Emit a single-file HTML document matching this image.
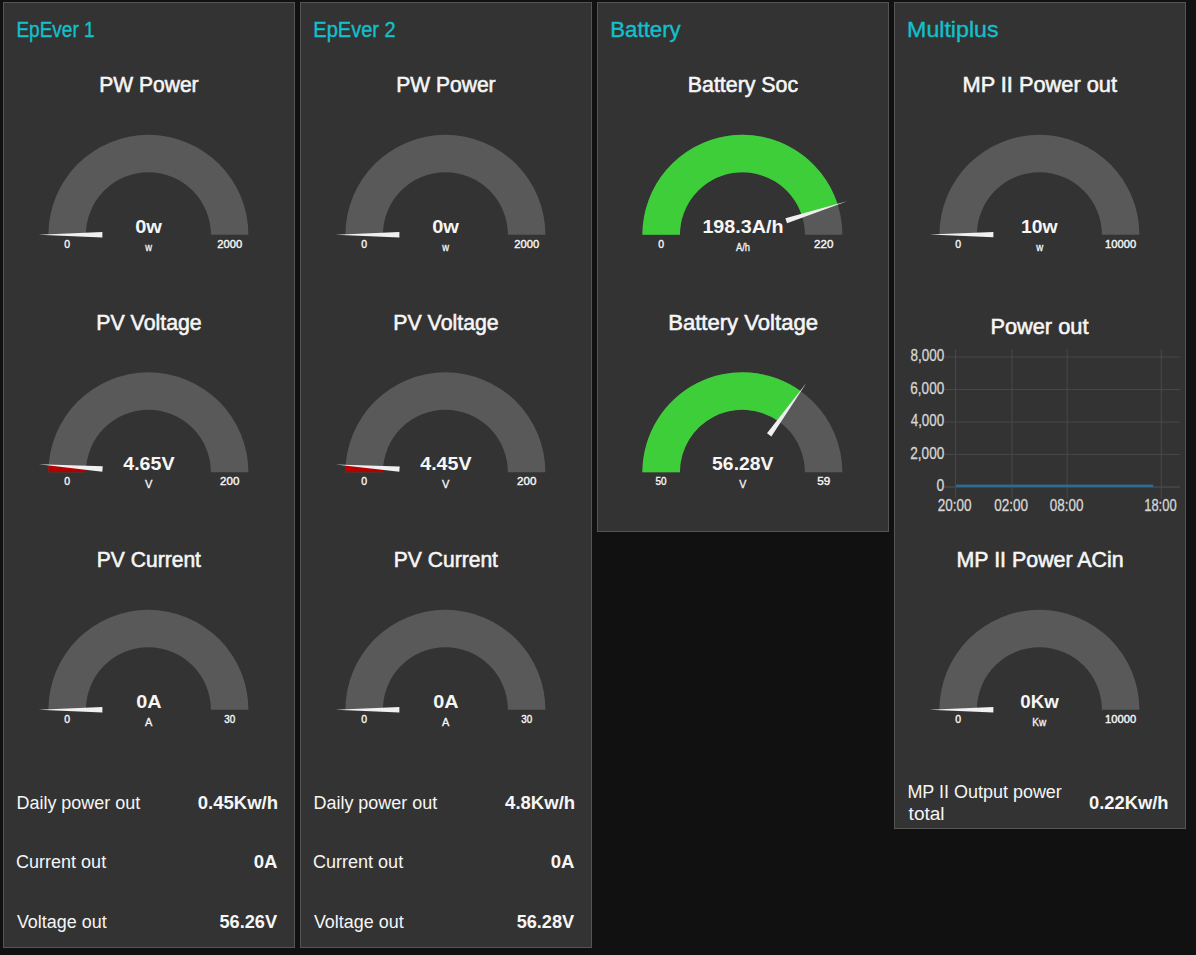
<!DOCTYPE html>
<html><head><meta charset="utf-8"><title>Node-RED Dashboard</title>
<style>
html,body{margin:0;padding:0;background:#111111;width:1196px;height:955px;overflow:hidden}
.grp-box{position:absolute;box-sizing:border-box;width:292px;background:#333333;border:1px solid #555555}
svg{position:absolute;left:0;top:0}
text{font-family:"Liberation Sans", sans-serif;white-space:pre}
.grp{fill:#12c0cc;stroke:#12c0cc;stroke-width:0.35px}
.gt{fill:#f6f6f6;stroke:#f6f6f6;stroke-width:0.55px}
.gv{font-weight:bold;fill:#f6f6f6}
.gu{fill:#f6f6f6;stroke:#f6f6f6;stroke-width:0.3px}
.gl{fill:#f6f6f6;stroke:#f6f6f6;stroke-width:0.4px}
.lt{fill:#f6f6f6}
.vt{font-weight:bold;fill:#f6f6f6}
.cl{fill:#d6d6d6;stroke:#d6d6d6;stroke-width:0.3px}
</style></head>
<body>
<div class="grp-box" style="left:3px;top:2px;height:946px"></div>
<div class="grp-box" style="left:300px;top:2px;height:946px"></div>
<div class="grp-box" style="left:597px;top:2px;height:530px"></div>
<div class="grp-box" style="left:894px;top:2px;height:827px"></div>
<svg width="1196" height="955" viewBox="0 0 1196 955">
<text x="16.43" y="36.90" class="grp" style="font-size:21.2px" textLength="78.19" lengthAdjust="spacingAndGlyphs">EpEver 1</text>
<text x="313.35" y="36.90" class="grp" style="font-size:21.2px" textLength="82.27" lengthAdjust="spacingAndGlyphs">EpEver 2</text>
<text x="610.26" y="36.90" class="grp" style="font-size:21.2px" textLength="70.50" lengthAdjust="spacingAndGlyphs">Battery</text>
<text x="907.09" y="36.90" class="grp" style="font-size:21.2px" textLength="91.44" lengthAdjust="spacingAndGlyphs">Multiplus</text>
<text x="99.26" y="91.90" class="gt" style="font-size:21.2px" textLength="99.37" lengthAdjust="spacingAndGlyphs">PW Power</text>
<path d="M85.90,234.80 L48.40,234.80 A100,100 0 0 1 248.40,234.80 L210.90,234.80 A62.5,62.5 0 0 0 85.90,234.80 Z" fill="#595959"/>
<path d="M102.40,232.10 L102.40,237.50 L38.50,234.80 Z" fill="#f0f0f0"/>
<text x="135.20" y="232.80" class="gv" style="font-size:18.8px" textLength="26.78" lengthAdjust="spacingAndGlyphs">0w</text>
<text x="145.30" y="250.80" class="gu" style="font-size:10.5px" textLength="6.77" lengthAdjust="spacingAndGlyphs">w</text>
<text x="64.18" y="247.80" class="gl" style="font-size:11.4px" textLength="5.82" lengthAdjust="spacingAndGlyphs">0</text>
<text x="217.29" y="247.80" class="gl" style="font-size:11.4px" textLength="24.90" lengthAdjust="spacingAndGlyphs">2000</text>
<text x="96.24" y="329.60" class="gt" style="font-size:21.2px" textLength="105.48" lengthAdjust="spacingAndGlyphs">PV Voltage</text>
<path d="M85.90,472.30 L48.40,472.30 A100,100 0 0 1 248.40,472.30 L210.90,472.30 A62.5,62.5 0 0 0 85.90,472.30 Z" fill="#595959"/>
<path d="M85.90,472.30 L48.40,472.30 A100,100 0 0 1 48.67,465.00 L86.07,467.74 A62.5,62.5 0 0 0 85.90,472.30 Z" fill="#b30000"/>
<path d="M102.72,466.25 L102.33,471.64 L38.79,464.28 Z" fill="#f0f0f0"/>
<text x="123.26" y="470.30" class="gv" style="font-size:18.8px" textLength="51.31" lengthAdjust="spacingAndGlyphs">4.65V</text>
<text x="144.99" y="488.30" class="gu" style="font-size:10.5px" textLength="7.41" lengthAdjust="spacingAndGlyphs">V</text>
<text x="64.18" y="485.30" class="gl" style="font-size:11.4px" textLength="5.82" lengthAdjust="spacingAndGlyphs">0</text>
<text x="220.07" y="485.30" class="gl" style="font-size:11.4px" textLength="19.33" lengthAdjust="spacingAndGlyphs">200</text>
<text x="96.76" y="567.00" class="gt" style="font-size:21.2px" textLength="104.23" lengthAdjust="spacingAndGlyphs">PV Current</text>
<path d="M85.90,709.80 L48.40,709.80 A100,100 0 0 1 248.40,709.80 L210.90,709.80 A62.5,62.5 0 0 0 85.90,709.80 Z" fill="#595959"/>
<path d="M102.40,707.10 L102.40,712.50 L38.50,709.80 Z" fill="#f0f0f0"/>
<text x="136.21" y="707.80" class="gv" style="font-size:18.8px" textLength="25.36" lengthAdjust="spacingAndGlyphs">0A</text>
<text x="145.02" y="725.80" class="gu" style="font-size:10.5px" textLength="7.35" lengthAdjust="spacingAndGlyphs">A</text>
<text x="64.18" y="722.80" class="gl" style="font-size:11.4px" textLength="5.82" lengthAdjust="spacingAndGlyphs">0</text>
<text x="224.33" y="722.80" class="gl" style="font-size:11.4px" textLength="10.96" lengthAdjust="spacingAndGlyphs">30</text>
<text x="16.52" y="809.00" class="lt" style="font-size:18.8px" textLength="123.61" lengthAdjust="spacingAndGlyphs">Daily power out</text>
<text x="16.10" y="868.00" class="lt" style="font-size:18.8px" textLength="90.04" lengthAdjust="spacingAndGlyphs">Current out</text>
<text x="16.91" y="927.70" class="lt" style="font-size:18.8px" textLength="89.72" lengthAdjust="spacingAndGlyphs">Voltage out</text>
<text x="197.66" y="808.80" class="vt" style="font-size:19.0px" textLength="80.46" lengthAdjust="spacingAndGlyphs">0.45Kw/h</text>
<text x="253.76" y="868.00" class="vt" style="font-size:19.0px" textLength="23.77" lengthAdjust="spacingAndGlyphs">0A</text>
<text x="219.45" y="927.70" class="vt" style="font-size:19.0px" textLength="57.67" lengthAdjust="spacingAndGlyphs">56.26V</text>
<text x="396.26" y="91.90" class="gt" style="font-size:21.2px" textLength="99.37" lengthAdjust="spacingAndGlyphs">PW Power</text>
<path d="M382.90,234.80 L345.40,234.80 A100,100 0 0 1 545.40,234.80 L507.90,234.80 A62.5,62.5 0 0 0 382.90,234.80 Z" fill="#595959"/>
<path d="M399.40,232.10 L399.40,237.50 L335.50,234.80 Z" fill="#f0f0f0"/>
<text x="432.20" y="232.80" class="gv" style="font-size:18.8px" textLength="26.78" lengthAdjust="spacingAndGlyphs">0w</text>
<text x="442.30" y="250.80" class="gu" style="font-size:10.5px" textLength="6.77" lengthAdjust="spacingAndGlyphs">w</text>
<text x="361.18" y="247.80" class="gl" style="font-size:11.4px" textLength="5.82" lengthAdjust="spacingAndGlyphs">0</text>
<text x="514.29" y="247.80" class="gl" style="font-size:11.4px" textLength="24.90" lengthAdjust="spacingAndGlyphs">2000</text>
<text x="393.24" y="329.60" class="gt" style="font-size:21.2px" textLength="105.48" lengthAdjust="spacingAndGlyphs">PV Voltage</text>
<path d="M382.90,472.30 L345.40,472.30 A100,100 0 0 1 545.40,472.30 L507.90,472.30 A62.5,62.5 0 0 0 382.90,472.30 Z" fill="#595959"/>
<path d="M382.90,472.30 L345.40,472.30 A100,100 0 0 1 345.64,465.32 L383.05,467.93 A62.5,62.5 0 0 0 382.90,472.30 Z" fill="#b30000"/>
<path d="M399.70,466.39 L399.32,471.78 L335.77,464.62 Z" fill="#f0f0f0"/>
<text x="420.26" y="470.30" class="gv" style="font-size:18.8px" textLength="51.31" lengthAdjust="spacingAndGlyphs">4.45V</text>
<text x="441.99" y="488.30" class="gu" style="font-size:10.5px" textLength="7.41" lengthAdjust="spacingAndGlyphs">V</text>
<text x="361.18" y="485.30" class="gl" style="font-size:11.4px" textLength="5.82" lengthAdjust="spacingAndGlyphs">0</text>
<text x="517.07" y="485.30" class="gl" style="font-size:11.4px" textLength="19.33" lengthAdjust="spacingAndGlyphs">200</text>
<text x="393.76" y="567.00" class="gt" style="font-size:21.2px" textLength="104.23" lengthAdjust="spacingAndGlyphs">PV Current</text>
<path d="M382.90,709.80 L345.40,709.80 A100,100 0 0 1 545.40,709.80 L507.90,709.80 A62.5,62.5 0 0 0 382.90,709.80 Z" fill="#595959"/>
<path d="M399.40,707.10 L399.40,712.50 L335.50,709.80 Z" fill="#f0f0f0"/>
<text x="433.21" y="707.80" class="gv" style="font-size:18.8px" textLength="25.36" lengthAdjust="spacingAndGlyphs">0A</text>
<text x="442.02" y="725.80" class="gu" style="font-size:10.5px" textLength="7.35" lengthAdjust="spacingAndGlyphs">A</text>
<text x="361.18" y="722.80" class="gl" style="font-size:11.4px" textLength="5.82" lengthAdjust="spacingAndGlyphs">0</text>
<text x="521.33" y="722.80" class="gl" style="font-size:11.4px" textLength="10.96" lengthAdjust="spacingAndGlyphs">30</text>
<text x="313.52" y="809.00" class="lt" style="font-size:18.8px" textLength="123.61" lengthAdjust="spacingAndGlyphs">Daily power out</text>
<text x="313.10" y="868.00" class="lt" style="font-size:18.8px" textLength="90.04" lengthAdjust="spacingAndGlyphs">Current out</text>
<text x="313.91" y="927.70" class="lt" style="font-size:18.8px" textLength="89.72" lengthAdjust="spacingAndGlyphs">Voltage out</text>
<text x="505.12" y="808.80" class="vt" style="font-size:19.0px" textLength="70.02" lengthAdjust="spacingAndGlyphs">4.8Kw/h</text>
<text x="550.76" y="868.00" class="vt" style="font-size:19.0px" textLength="23.77" lengthAdjust="spacingAndGlyphs">0A</text>
<text x="516.66" y="927.70" class="vt" style="font-size:19.0px" textLength="57.47" lengthAdjust="spacingAndGlyphs">56.28V</text>
<text x="687.84" y="91.60" class="gt" style="font-size:21.2px" textLength="110.33" lengthAdjust="spacingAndGlyphs">Battery Soc</text>
<path d="M679.90,234.80 L642.40,234.80 A100,100 0 0 1 842.40,234.80 L804.90,234.80 A62.5,62.5 0 0 0 679.90,234.80 Z" fill="#595959"/>
<path d="M679.90,234.80 L642.40,234.80 A100,100 0 0 1 837.64,204.31 L801.92,215.74 A62.5,62.5 0 0 0 679.90,234.80 Z" fill="#3dce39"/>
<path d="M787.03,223.34 L785.39,218.20 L847.07,201.29 Z" fill="#f0f0f0"/>
<text x="702.42" y="232.80" class="gv" style="font-size:18.8px" textLength="81.13" lengthAdjust="spacingAndGlyphs">198.3A/h</text>
<text x="735.98" y="250.80" class="gu" style="font-size:10.5px" textLength="14.04" lengthAdjust="spacingAndGlyphs">A/h</text>
<text x="658.18" y="247.80" class="gl" style="font-size:11.4px" textLength="5.82" lengthAdjust="spacingAndGlyphs">0</text>
<text x="814.07" y="247.80" class="gl" style="font-size:11.4px" textLength="19.33" lengthAdjust="spacingAndGlyphs">220</text>
<text x="668.18" y="329.90" class="gt" style="font-size:21.2px" textLength="149.86" lengthAdjust="spacingAndGlyphs">Battery Voltage</text>
<path d="M679.90,472.30 L642.40,472.30 A100,100 0 0 1 842.40,472.30 L804.90,472.30 A62.5,62.5 0 0 0 679.90,472.30 Z" fill="#595959"/>
<path d="M679.90,472.30 L642.40,472.30 A100,100 0 0 1 800.61,390.99 L778.78,421.48 A62.5,62.5 0 0 0 679.90,472.30 Z" fill="#3dce39"/>
<path d="M771.37,436.47 L766.98,433.33 L806.38,382.94 Z" fill="#f0f0f0"/>
<text x="712.12" y="470.30" class="gv" style="font-size:18.8px" textLength="61.32" lengthAdjust="spacingAndGlyphs">56.28V</text>
<text x="739.15" y="488.30" class="gu" style="font-size:10.5px" textLength="7.10" lengthAdjust="spacingAndGlyphs">V</text>
<text x="655.60" y="485.30" class="gl" style="font-size:11.4px" textLength="10.99" lengthAdjust="spacingAndGlyphs">50</text>
<text x="817.33" y="485.30" class="gl" style="font-size:11.4px" textLength="13.02" lengthAdjust="spacingAndGlyphs">59</text>
<text x="962.50" y="92.10" class="gt" style="font-size:21.2px" textLength="154.48" lengthAdjust="spacingAndGlyphs">MP II Power out</text>
<path d="M976.90,234.80 L939.40,234.80 A100,100 0 0 1 1139.40,234.80 L1101.90,234.80 A62.5,62.5 0 0 0 976.90,234.80 Z" fill="#595959"/>
<path d="M993.41,231.96 L993.39,237.36 L929.50,234.45 Z" fill="#f0f0f0"/>
<text x="1021.04" y="232.80" class="gv" style="font-size:18.8px" textLength="36.67" lengthAdjust="spacingAndGlyphs">10w</text>
<text x="1036.20" y="250.80" class="gu" style="font-size:10.5px" textLength="6.97" lengthAdjust="spacingAndGlyphs">w</text>
<text x="955.18" y="247.80" class="gl" style="font-size:11.4px" textLength="5.82" lengthAdjust="spacingAndGlyphs">0</text>
<text x="1105.06" y="247.80" class="gl" style="font-size:11.4px" textLength="31.07" lengthAdjust="spacingAndGlyphs">10000</text>
<text x="956.54" y="567.10" class="gt" style="font-size:21.2px" textLength="167.17" lengthAdjust="spacingAndGlyphs">MP II Power ACin</text>
<path d="M976.90,709.80 L939.40,709.80 A100,100 0 0 1 1139.40,709.80 L1101.90,709.80 A62.5,62.5 0 0 0 976.90,709.80 Z" fill="#595959"/>
<path d="M993.40,707.10 L993.40,712.50 L929.50,709.80 Z" fill="#f0f0f0"/>
<text x="1020.35" y="707.80" class="gv" style="font-size:18.8px" textLength="38.53" lengthAdjust="spacingAndGlyphs">0Kw</text>
<text x="1032.33" y="725.80" class="gu" style="font-size:10.5px" textLength="13.89" lengthAdjust="spacingAndGlyphs">Kw</text>
<text x="955.18" y="722.80" class="gl" style="font-size:11.4px" textLength="5.82" lengthAdjust="spacingAndGlyphs">0</text>
<text x="1105.06" y="722.80" class="gl" style="font-size:11.4px" textLength="31.07" lengthAdjust="spacingAndGlyphs">10000</text>
<text x="990.40" y="333.90" class="gt" style="font-size:21.2px" textLength="98.06" lengthAdjust="spacingAndGlyphs">Power out</text>
<rect x="944" y="356.54" width="236" height="1" fill="#494949"/>
<text x="910.43" y="361.24" class="cl" style="font-size:17.0px" textLength="33.78" lengthAdjust="spacingAndGlyphs">8,000</text>
<rect x="944" y="389.04" width="236" height="1" fill="#494949"/>
<text x="910.32" y="393.74" class="cl" style="font-size:17.0px" textLength="33.89" lengthAdjust="spacingAndGlyphs">6,000</text>
<rect x="944" y="421.54" width="236" height="1" fill="#494949"/>
<text x="910.70" y="426.24" class="cl" style="font-size:17.0px" textLength="33.50" lengthAdjust="spacingAndGlyphs">4,000</text>
<rect x="944" y="453.90" width="236" height="1" fill="#494949"/>
<text x="910.32" y="458.60" class="cl" style="font-size:17.0px" textLength="33.89" lengthAdjust="spacingAndGlyphs">2,000</text>
<rect x="944" y="486.54" width="236" height="1" fill="#535353"/>
<text x="936.44" y="491.24" class="cl" style="font-size:17.0px" textLength="7.80" lengthAdjust="spacingAndGlyphs">0</text>
<rect x="955.05" y="349" width="1" height="149.5" fill="#494949"/>
<text x="937.83" y="511.00" class="cl" style="font-size:17.0px" textLength="33.78" lengthAdjust="spacingAndGlyphs">20:00</text>
<rect x="1011.54" y="349" width="1" height="149.5" fill="#494949"/>
<text x="994.26" y="511.00" class="cl" style="font-size:17.0px" textLength="33.85" lengthAdjust="spacingAndGlyphs">02:00</text>
<rect x="1066.65" y="349" width="1" height="149.5" fill="#494949"/>
<text x="1049.86" y="511.00" class="cl" style="font-size:17.0px" textLength="33.64" lengthAdjust="spacingAndGlyphs">08:00</text>
<rect x="1160.75" y="349" width="1" height="149.5" fill="#494949"/>
<text x="1144.23" y="511.00" class="cl" style="font-size:17.0px" textLength="32.36" lengthAdjust="spacingAndGlyphs">18:00</text>
<rect x="956" y="484.6" width="197.2" height="2.4" fill="#306b94"/>
<text x="907.42" y="798.00" class="lt" style="font-size:18.8px" textLength="154.44" lengthAdjust="spacingAndGlyphs">MP II Output power</text>
<text x="908.61" y="820.00" class="lt" style="font-size:18.8px" textLength="35.97" lengthAdjust="spacingAndGlyphs">total</text>
<text x="1088.97" y="809.00" class="vt" style="font-size:19.0px" textLength="79.54" lengthAdjust="spacingAndGlyphs">0.22Kw/h</text>
</svg>
</body></html>
